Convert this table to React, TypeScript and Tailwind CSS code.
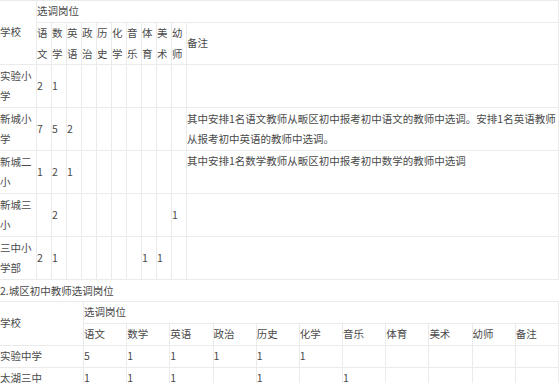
const SUBJECTS = ["语文", "数学", "英语", "政治", "历史", "化学", "音乐", "体育", "美术", "幼师"];

type Row = { school: string; counts: string[]; note?: string; noteTop?: boolean };

const PRIMARY: Row[] = [
  { school: "实验小学", counts: ["2", "1"] },
  {
    school: "新城小学",
    counts: ["7", "5", "2"],
    note: "其中安排1名语文教师从畈区初中报考初中语文的教师中选调。安排1名英语教师从报考初中英语的教师中选调。",
  },
  {
    school: "新城二小",
    counts: ["1", "2", "1"],
    note: "其中安排1名数学教师从畈区初中报考初中数学的教师中选调",
    noteTop: true,
  },
  { school: "新城三小", counts: ["", "2", "", "", "", "", "", "", "", "1"] },
  { school: "三中小学部", counts: ["2", "1", "", "", "", "", "", "1", "1"] },
];

const MIDDLE: Row[] = [
  { school: "实验中学", counts: ["5", "1", "1", "1", "1", "1"] },
  { school: "太湖三中", counts: ["1", "1", "1", "", "1", "", "1"] },
];

// separate borders: each cell draws only its right and bottom line
const cell = "border-r border-b border-[#ebebeb] p-0 align-middle";

export default function App() {
  return (
    <div
      className="w-[560px] h-[383px] overflow-hidden bg-white text-[10.5px] leading-[20.5px] text-[#4a4a4a]"
      style={{ fontFamily: '"Noto Sans CJK SC", "Noto Sans", sans-serif' }}
    >
      {/* 1. 城区小学 */}
      <table className="w-[559px] table-fixed border-separate border-spacing-0 border-t border-[#ebebeb]">
        <colgroup>
          <col className="w-[37px]" />
          {SUBJECTS.map((s) => (
            <col key={s} className="w-[15px]" />
          ))}
          <col />
        </colgroup>
        <tbody>
          <tr>
            <td rowSpan={2} className={cell}>
              学校
            </td>
            <td colSpan={11} className={cell + " h-[22px]"}>
              选调岗位
            </td>
          </tr>
          <tr>
            {SUBJECTS.map((s) => (
              <td key={s} className={cell + " h-[42px]"}>
                {s}
              </td>
            ))}
            <td className={cell}>备注</td>
          </tr>
          {PRIMARY.map((r) => (
            <tr key={r.school}>
              <td className={cell + " h-[43px]"}>{r.school}</td>
              {SUBJECTS.map((s, i) => (
                <td key={s} className={cell}>
                  {r.counts[i] ?? ""}
                </td>
              ))}
              <td className={r.noteTop ? cell + " !align-top" : cell}>{r.note ?? ""}</td>
            </tr>
          ))}
        </tbody>
      </table>

      <p className="h-[21px] leading-[21px]">2.城区初中教师选调岗位</p>

      {/* 2. 城区初中 */}
      <table className="w-[559px] table-fixed border-separate border-spacing-0 border-t border-[#ebebeb]">
        <colgroup>
          <col className="w-[84px]" />
          {SUBJECTS.map((s) => (
            <col key={s} />
          ))}
          <col />
        </colgroup>
        <tbody>
          <tr>
            <td rowSpan={2} className={cell}>
              学校
            </td>
            <td colSpan={11} className={cell + " h-[21px]"}>
              选调岗位
            </td>
          </tr>
          <tr>
            {SUBJECTS.map((s) => (
              <td key={s} className={cell + " h-[22px]"}>
                {s}
              </td>
            ))}
            <td className={cell}>备注</td>
          </tr>
          {MIDDLE.map((r) => (
            <tr key={r.school}>
              <td className={cell + " h-[22px]"}>{r.school}</td>
              {SUBJECTS.map((s, i) => (
                <td key={s} className={cell}>
                  {r.counts[i] ?? ""}
                </td>
              ))}
              <td className={cell}></td>
            </tr>
          ))}
        </tbody>
      </table>
    </div>
  );
}
